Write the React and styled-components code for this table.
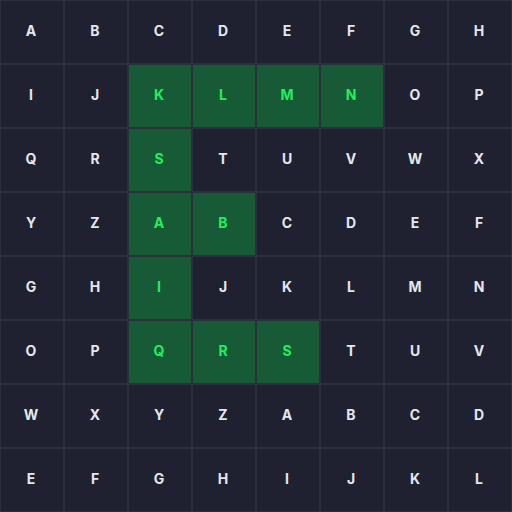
import React from 'react';
import styled, { createGlobalStyle } from 'styled-components';

const GlobalStyle = createGlobalStyle`
  html, body {
    margin: 0;
    padding: 0;
    background: #1f2130;
  }
`;

const Board = styled.div`
  display: grid;
  grid-template-columns: repeat(8, 64px);
  grid-auto-rows: 64px;
  width: 512px;
  height: 512px;
  background: #1f2130;
  font-family: Inter, 'Noto Sans', sans-serif;
`;

const Cell = styled.div`
  box-sizing: border-box;
  border: 1px solid #2b2e3d;
  padding: 0 2px 3px 0;
  display: flex;
  align-items: center;
  justify-content: center;
  font-size: 14px;
  font-weight: 700;
  background: ${(p) => (p.$found ? '#165a36' : '#1f2130')};
  color: ${(p) => (p.$found ? '#24ee5e' : '#e4e7f1')};
`;

const rows = [
  'ABCDEFGH',
  'IJKLMNOP',
  'QRSTUVWX',
  'YZABCDEF',
  'GHIJKLMN',
  'OPQRSTUV',
  'WXYZABCD',
  'EFGHIJKL',
];

const found = new Set([
  '1-2', '1-3', '1-4', '1-5',
  '2-2',
  '3-2', '3-3',
  '4-2',
  '5-2', '5-3', '5-4',
]);

const App = () => {
  return (
    <>
      <GlobalStyle />
      <Board>
        {rows.map((row, r) =>
          row.split('').map((ch, c) => (
            <Cell key={`${r}-${c}`} $found={found.has(`${r}-${c}`)}>
              {ch}
            </Cell>
          ))
        )}
      </Board>
    </>
  );
};

export default App;
